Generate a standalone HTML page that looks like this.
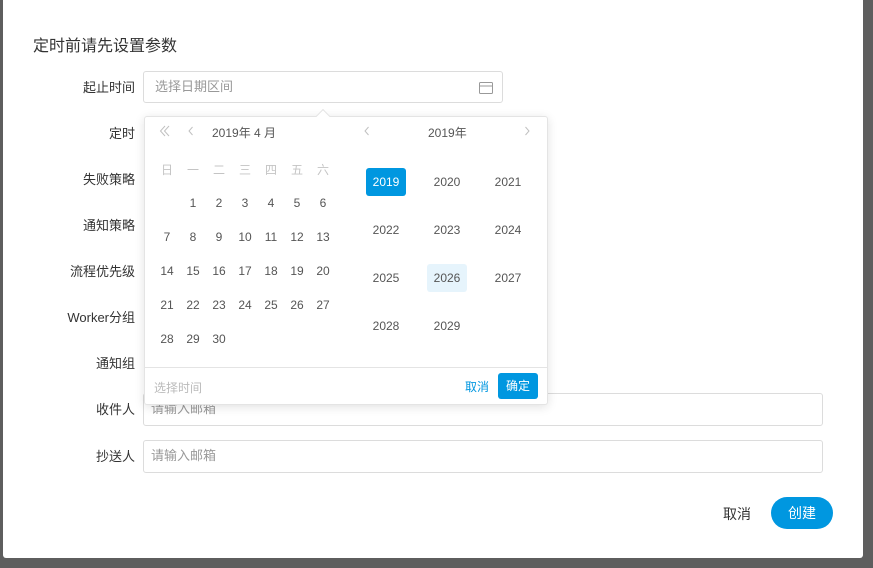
<!DOCTYPE html>
<html><head><meta charset="utf-8"><style>
*{margin:0;padding:0;box-sizing:border-box}
body{width:873px;height:568px;background:#5e5e5e;position:relative;overflow:hidden;font-family:"Liberation Sans","Noto Sans CJK SC",sans-serif;color:#333}
.dlg{position:absolute;left:3px;top:0;width:860px;height:558px;background:#fff;border-radius:0 0 3px 3px}
.a{position:absolute;white-space:nowrap}
.lbl{position:absolute;right:738px;font-size:13px;color:#333}
.inp{position:absolute;border:1px solid #dcdcdc;border-radius:3px;background:#fff;font-size:13px;color:#999;padding-left:7px;line-height:30px}
.pop{position:absolute;left:144px;top:116px;width:404px;height:289px;background:#fff;border:1px solid #e4e4e4;border-radius:3px;box-shadow:0 2px 10px rgba(0,0,0,.12)}
.c{position:absolute;font-size:12px;text-align:center;width:26px;margin-left:-13px;color:#555}
.w{color:#c4c4c4}
.y{position:absolute;font-size:12px;color:#555;width:40px;height:28px;line-height:28px;text-align:center;margin-left:-20px;margin-top:-14px;border-radius:3px}
svg.ch{position:absolute}
</style></head><body>
<div class="dlg"></div>
<div class="a" style="left:33px;top:32px;font-size:16px;color:#333">定时前请先设置参数</div>
<div class="lbl" style="top:77px">起止时间</div>
<div class="lbl" style="top:123px">定时</div>
<div class="lbl" style="top:169px">失败策略</div>
<div class="lbl" style="top:215px">通知策略</div>
<div class="lbl" style="top:261px">流程优先级</div>
<div class="lbl" style="top:307px">Worker分组</div>
<div class="lbl" style="top:353px">通知组</div>
<div class="lbl" style="top:399px">收件人</div>
<div class="lbl" style="top:446px">抄送人</div>
<div class="inp" style="left:143px;top:71px;width:360px;height:32px;padding-left:11px">选择日期区间
<svg style="position:absolute;right:9px;top:9px" width="14" height="13" viewBox="0 0 14 13"><rect x="0.5" y="1.5" width="13" height="11" rx="1" fill="none" stroke="#999"/><line x1="0.5" y1="5" x2="13.5" y2="5" stroke="#999"/></svg></div>
<div class="inp" style="left:143px;top:393px;width:680px;height:33px">请输入邮箱</div>
<div class="inp" style="left:143px;top:440px;width:680px;height:33px">请输入邮箱</div>
<div class="a" style="left:723px;top:504px;font-size:14px;color:#333">取消</div>
<div class="a" style="left:771px;top:497px;width:62px;height:32px;border-radius:16px;background:#0097e0;color:#fff;font-size:14px;line-height:32px;text-align:center">创建</div>
<div class="pop"></div>
<div class="a" style="left:318px;top:111px;width:10px;height:10px;background:#fff;border-left:1px solid #e4e4e4;border-top:1px solid #e4e4e4;transform:rotate(45deg)"></div>
<svg class="ch" style="left:159px;top:125px" width="12" height="12" viewBox="0 0 12 12"><path d="M6 1L1.5 6L6 11M10 1L5.5 6L10 11" fill="none" stroke="#c0c0c0"/></svg>
<svg class="ch" style="left:187px;top:126px" width="8" height="10" viewBox="0 0 8 10"><path d="M5.5 1L2 5L5.5 9" fill="none" stroke="#c0c0c0"/></svg>
<div class="a" style="left:212px;top:124px;font-size:12px;color:#555">2019年 4 月</div>
<svg class="ch" style="left:363px;top:126px" width="8" height="10" viewBox="0 0 8 10"><path d="M5.5 1L2 5L5.5 9" fill="none" stroke="#c0c0c0"/></svg>
<div class="a" style="left:428px;top:124px;font-size:12px;color:#555">2019年</div>
<svg class="ch" style="left:523px;top:126px" width="8" height="10" viewBox="0 0 8 10"><path d="M2.5 1L6 5L2.5 9" fill="none" stroke="#c0c0c0"/></svg>
<div class="y" style="left:386px;top:182px;background:#0097e0;color:#fff">2019</div>
<div class="y" style="left:447px;top:182px">2020</div>
<div class="y" style="left:508px;top:182px">2021</div>
<div class="y" style="left:386px;top:230px">2022</div>
<div class="y" style="left:447px;top:230px">2023</div>
<div class="y" style="left:508px;top:230px">2024</div>
<div class="y" style="left:386px;top:278px">2025</div>
<div class="y" style="left:447px;top:278px;background:#e6f4fc">2026</div>
<div class="y" style="left:508px;top:278px">2027</div>
<div class="y" style="left:386px;top:326px">2028</div>
<div class="y" style="left:447px;top:326px">2029</div>
<div class="a" style="left:145px;top:367px;width:402px;border-top:1px solid #e4e4e4"></div>
<div class="a" style="left:154px;top:379px;font-size:12px;color:#bbb">选择时间</div>
<div class="a" style="left:465px;top:378px;font-size:12px;color:#0097e0">取消</div>
<div class="a" style="left:498px;top:373px;width:40px;height:26px;border-radius:3px;background:#0097e0;color:#fff;font-size:12px;line-height:26px;text-align:center">确定</div>
<div class="c w" style="left:167px;top:161px">日</div><div class="c w" style="left:193px;top:161px">一</div><div class="c w" style="left:219px;top:161px">二</div><div class="c w" style="left:245px;top:161px">三</div><div class="c w" style="left:271px;top:161px">四</div><div class="c w" style="left:297px;top:161px">五</div><div class="c w" style="left:323px;top:161px">六</div>
<div class="c" style="left:193px;top:196px">1</div><div class="c" style="left:219px;top:196px">2</div><div class="c" style="left:245px;top:196px">3</div><div class="c" style="left:271px;top:196px">4</div><div class="c" style="left:297px;top:196px">5</div><div class="c" style="left:323px;top:196px">6</div>
<div class="c" style="left:167px;top:230px">7</div><div class="c" style="left:193px;top:230px">8</div><div class="c" style="left:219px;top:230px">9</div><div class="c" style="left:245px;top:230px">10</div><div class="c" style="left:271px;top:230px">11</div><div class="c" style="left:297px;top:230px">12</div><div class="c" style="left:323px;top:230px">13</div>
<div class="c" style="left:167px;top:264px">14</div><div class="c" style="left:193px;top:264px">15</div><div class="c" style="left:219px;top:264px">16</div><div class="c" style="left:245px;top:264px">17</div><div class="c" style="left:271px;top:264px">18</div><div class="c" style="left:297px;top:264px">19</div><div class="c" style="left:323px;top:264px">20</div>
<div class="c" style="left:167px;top:298px">21</div><div class="c" style="left:193px;top:298px">22</div><div class="c" style="left:219px;top:298px">23</div><div class="c" style="left:245px;top:298px">24</div><div class="c" style="left:271px;top:298px">25</div><div class="c" style="left:297px;top:298px">26</div><div class="c" style="left:323px;top:298px">27</div>
<div class="c" style="left:167px;top:332px">28</div><div class="c" style="left:193px;top:332px">29</div><div class="c" style="left:219px;top:332px">30</div>
</body></html>
